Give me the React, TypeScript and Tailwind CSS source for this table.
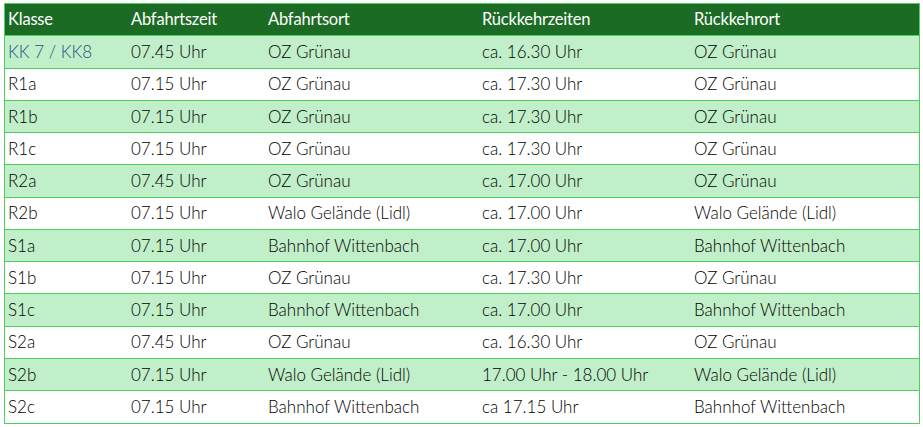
import React from "react";

const rows: [string, string, string, string, string][] = [
  ["KK 7 / KK8", "07.45 Uhr", "OZ Grünau", "ca. 16.30 Uhr", "OZ Grünau"],
  ["R1a", "07.15 Uhr", "OZ Grünau", "ca. 17.30 Uhr", "OZ Grünau"],
  ["R1b", "07.15 Uhr", "OZ Grünau", "ca. 17.30 Uhr", "OZ Grünau"],
  ["R1c", "07.15 Uhr", "OZ Grünau", "ca. 17.30 Uhr", "OZ Grünau"],
  ["R2a", "07.45 Uhr", "OZ Grünau", "ca. 17.00 Uhr", "OZ Grünau"],
  ["R2b", "07.15 Uhr", "Walo Gelände (Lidl)", "ca. 17.00 Uhr", "Walo Gelände (Lidl)"],
  ["S1a", "07.15 Uhr", "Bahnhof Wittenbach", "ca. 17.00 Uhr", "Bahnhof Wittenbach"],
  ["S1b", "07.15 Uhr", "OZ Grünau", "ca. 17.30 Uhr", "OZ Grünau"],
  ["S1c", "07.15 Uhr", "Bahnhof Wittenbach", "ca. 17.00 Uhr", "Bahnhof Wittenbach"],
  ["S2a", "07.45 Uhr", "OZ Grünau", "ca. 16.30 Uhr", "OZ Grünau"],
  ["S2b", "07.15 Uhr", "Walo Gelände (Lidl)", "17.00 Uhr - 18.00 Uhr", "Walo Gelände (Lidl)"],
  ["S2c", "07.15 Uhr", "Bahnhof Wittenbach", "ca 17.15 Uhr", "Bahnhof Wittenbach"],
];

const headers = ["Klasse", "Abfahrtszeit", "Abfahrtsort", "Rückkehrzeiten", "Rückkehrort"];

const cols = "grid grid-cols-[123px_137px_214px_212px_228px]";

export default function App() {
  return (
    <div className="bg-white w-[923px] h-[427px] pt-[3px] pl-[4px]" style={{ fontFamily: "Lato, 'Open Sans', sans-serif" }}>
      <div className="w-[916px] border border-[#4ccf5c]">
        <div className={`${cols} h-[32.25px] bg-[#1b6b25] border-b border-[#4ccf5c] text-white text-[16.5px] tracking-[-0.2px] items-center`}>
          {headers.map((h) => (
            <div key={h} className="pl-[3px]">{h}</div>
          ))}
        </div>
        {rows.map((r, i) => (
          <div
            key={i}
            className={`${cols} h-[32.25px] items-center text-[17px] font-light text-black ${i % 2 === 0 ? "bg-[#c1efc9]" : "bg-white"} ${i < rows.length - 1 ? "border-b border-[#4ccf5c]" : ""}`}
          >
            {r.map((c, j) => (
              <div key={j} className={`pl-[3px] whitespace-nowrap ${i === 0 && j === 0 ? "text-[#1c4f86]" : ""}`}>
                {c}
              </div>
            ))}
          </div>
        ))}
      </div>
    </div>
  );
}
